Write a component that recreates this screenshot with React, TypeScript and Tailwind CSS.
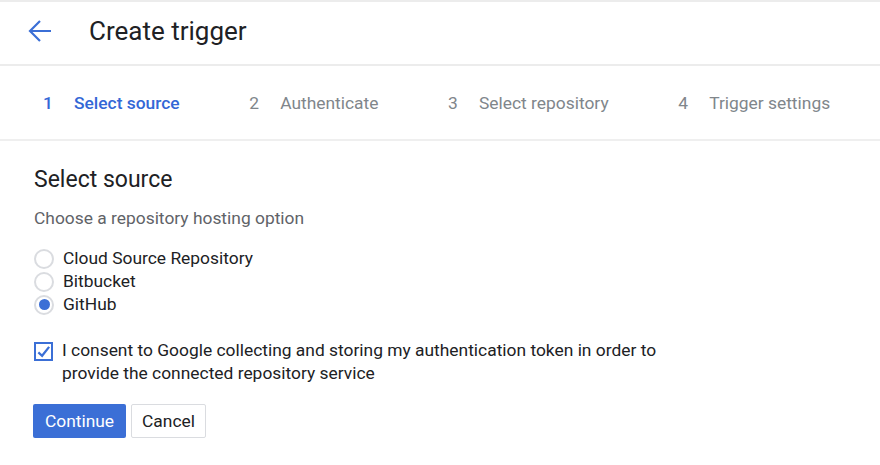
const steps = [
  { n: '1', label: 'Select source', active: true },
  { n: '2', label: 'Authenticate' },
  { n: '3', label: 'Select repository' },
  { n: '4', label: 'Trigger settings' },
];

const sources = ['Cloud Source Repository', 'Bitbucket', 'GitHub'];

export default function App() {
  return (
    <div className="w-[880px] h-[465px] bg-white font-['Roboto',sans-serif] text-[#202124] overflow-hidden">
      {/* Header */}
      <div className="h-[66px] border-t-2 border-b-2 border-[#ececec] flex items-center pl-[28px] pb-[4px]">
        <svg viewBox="0 0 24 22" className="w-[24px] h-[22px]">
          <path d="M23 11 H2 M12 1 L2 11 L12 21" fill="none" stroke="#3b6fd6" strokeWidth="2.2" />
        </svg>
        <h1 className="ml-[37px] text-[26px] leading-none">Create trigger</h1>
      </div>

      {/* Stepper */}
      <div className="h-[75px] border-b-2 border-[#efefef] flex items-center pl-[43px] pt-[2px] text-[17.4px] whitespace-nowrap">
        {steps.map((s) => (
          <div key={s.n} className={`flex items-center shrink-0 mr-[69.5px] ${s.active ? 'text-[#3367d6] font-medium' : 'text-[#80868b]'}`}>
            <span className="w-[31px]">{s.n}</span>
            <span>{s.label}</span>
          </div>
        ))}
      </div>

      {/* Body */}
      <div className="pl-[34px] pt-[25px]">
        <h2 className="text-[23px] leading-[28px]">Select source</h2>
        <p className="mt-[14px] text-[17.4px] text-[#5f6368] leading-[20px]">Choose a repository hosting option</p>

        <div className="mt-[19px] flex flex-col">
          {sources.map((s) => (
            <label key={s} className="flex items-center h-[23px] text-[17.4px]">
              <span className="w-[20px] h-[20px] rounded-full border-2 border-[#dadce0] flex items-center justify-center">
                {s === 'GitHub' && <span className="w-[11px] h-[11px] rounded-full bg-[#3b6fd6]" />}
              </span>
              <span className="ml-[9px]">{s}</span>
            </label>
          ))}
        </div>

        <div className="mt-[23px] flex items-start">
          <span className="mt-[3px] w-[19px] h-[19px] border-2 border-[#3b6fd6] flex items-center justify-center shrink-0">
            <svg viewBox="0 0 16 16" className="w-[16px] h-[16px]">
              <path d="M2.5 8.5 L6.5 12 L14 2.5" fill="none" stroke="#3b6fd6" strokeWidth="2.4" />
            </svg>
          </span>
          <p className="ml-[9px] text-[17.4px] leading-[23px] w-[610px]">
            I consent to Google collecting and storing my authentication token in order to provide the connected repository service
          </p>
        </div>

        <div className="mt-[19px] flex items-center gap-[5px] -ml-[1px]">
          <button className="h-[34px] w-[93px] bg-[#3b6fd6] text-white text-[17.4px] rounded-[2px]">Continue</button>
          <button className="h-[34px] w-[75px] border border-[#dadce0] text-[17.4px] rounded-[2px] text-[#202124]">Cancel</button>
        </div>
      </div>
    </div>
  );
}
